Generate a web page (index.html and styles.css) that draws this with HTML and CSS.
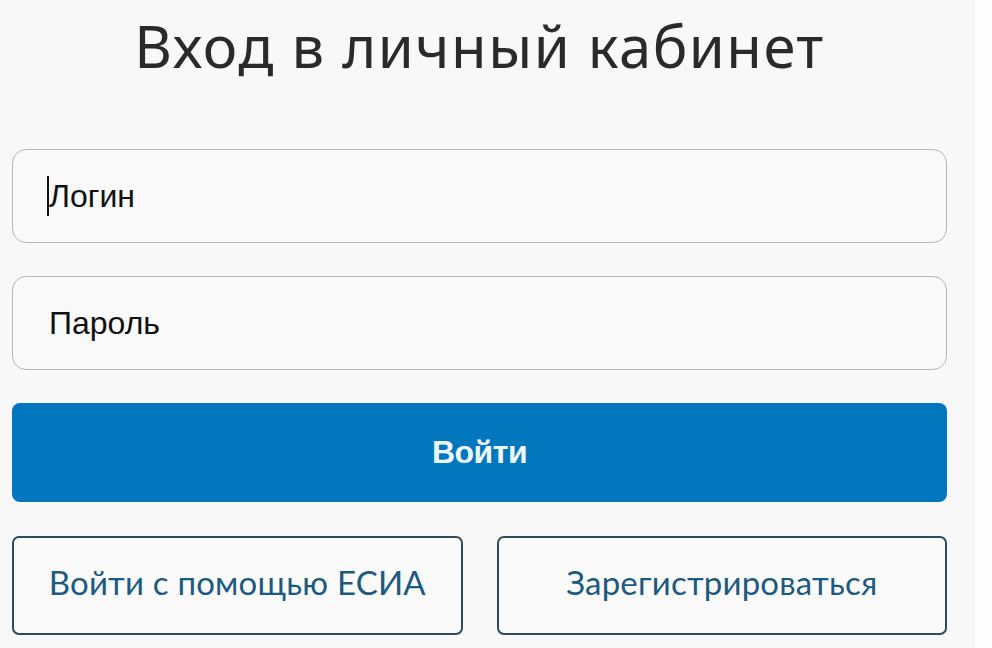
FILE: index.html
```html
<!DOCTYPE html>
<html lang="ru">
<head>
    <meta charset="UTF-8">
    <meta name="viewport" content="width=device-width, initial-scale=1.0">
    <title>Вход в личный кабинет</title>
    <link rel="stylesheet" href="styles.css">
</head>
<body>
    <div class="page">
        <h1>Вход в личный кабинет</h1>
        <form class="login-form" onsubmit="return false">
            <!-- Credentials -->
            <div class="field">
                <span class="caret"></span>
                <input type="text" name="login" placeholder="Логин">
            </div>
            <div class="field">
                <input type="password" name="password" placeholder="Пароль">
            </div>

            <button type="submit" class="btn-primary">Войти</button>

            <!-- Alternative actions -->
            <div class="actions">
                <button type="button" class="btn-outline">Войти с помощью ЕСИА</button>
                <button type="button" class="btn-outline">Зарегистрироваться</button>
            </div>
        </form>
    </div>
</body>
</html>
```

FILE: styles.css
```css
body {
    margin: 0;
    background-color: #fdfdfd;
    font-family: "Liberation Sans", Arial, sans-serif;
}
.page {
    width: 935px;
    height: 648px;
    padding: 0 28px 0 12px;
    background-color: #f8f8f8;
    overflow: hidden;
}
h1 {
    margin: 0;
    padding-top: 11px;
    height: 149px;
    box-sizing: border-box;
    font-family: "Noto Sans", sans-serif;
    font-weight: 400;
    font-size: 58px;
    line-height: 70px;
    letter-spacing: 1.5px;
    color: #2a2a2a;
    text-align: center;
}
.login-form {
    display: flex;
    flex-direction: column;
    gap: 33px;
}
.field {
    position: relative;
    height: 94px;
    border: 1px solid #b5b5b5;
    border-radius: 14px;
    box-sizing: border-box;
    background-color: #f9f9f9;
}
.field input {
    width: 100%;
    height: 100%;
    box-sizing: border-box;
    padding: 0 0 0 36px;
    border: none;
    background: transparent;
    font-family: "Liberation Sans", Arial, sans-serif;
    font-size: 32px;
    color: #111;
    outline: none;
}
.field input::placeholder {
    color: #111;
}
.caret {
    position: absolute;
    left: 34px;
    top: 26px;
    width: 2px;
    height: 40px;
    background-color: #111;
}
.btn-primary {
    height: 99px;
    border: none;
    border-radius: 8px;
    background-color: #0277bd;
    color: #eef8fc;
    font-family: "Liberation Sans", Arial, sans-serif;
    font-weight: 700;
    font-size: 32px;
    letter-spacing: -0.5px;
    cursor: pointer;
}
.actions {
    display: flex;
    gap: 34px;
    margin-top: 1px;
}
.btn-outline {
    flex: 1;
    height: 99px;
    padding-bottom: 8px;
    border: 2px solid #2f4b5b;
    border-radius: 7px;
    background-color: #fafafa;
    color: #1d5a80;
    font-family: Lato, sans-serif;
    font-size: 33px;
    letter-spacing: 0.2px;
    cursor: pointer;
}
```
